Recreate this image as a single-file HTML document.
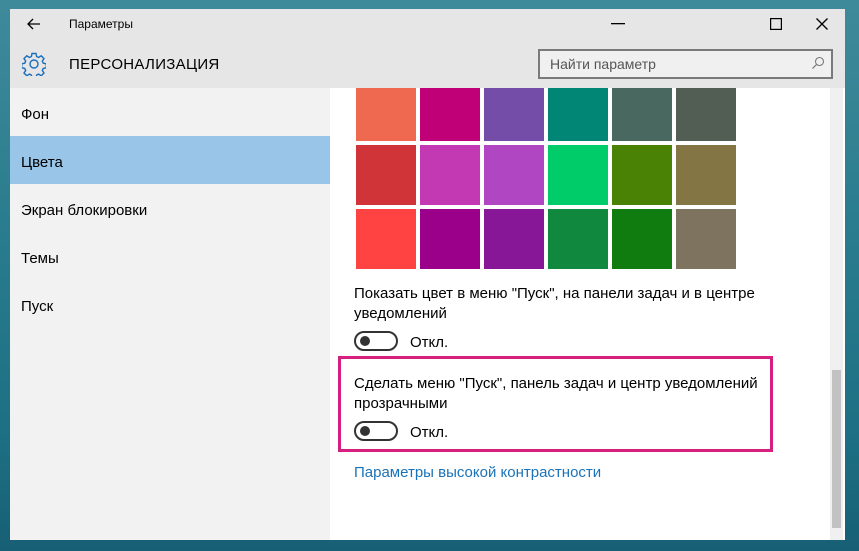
<!DOCTYPE html>
<html><head><meta charset="utf-8"><style>
*{margin:0;padding:0;box-sizing:border-box}
body{width:859px;height:551px;overflow:hidden;position:relative;font-family:"Liberation Sans","DejaVu Sans",sans-serif;
background:linear-gradient(180deg,#3f8a9a 0%,#2a7d8e 40%,#1d6f83 80%,#175f74 100%);}
.win{position:absolute;left:10px;top:9px;width:835px;height:531px;background:#fff;overflow:hidden}
.hdr{position:absolute;left:0;top:0;width:835px;height:79px;background:#e6e6e6}
.side{position:absolute;left:0;top:79px;width:320px;height:452px;background:#f2f2f2}
.t{position:absolute;white-space:nowrap;color:#000}
.item{position:absolute;left:0;width:320px;height:48px;font-size:15px;line-height:48px;padding-left:11px}
.item span{position:relative;top:3px}
.sel{background:#99c5e8}
.sw{position:absolute;width:60px}
.sb{position:absolute;left:820px;top:79px;width:13px;height:452px;background:#f0f0f0}
.thumb{position:absolute;left:822px;top:361px;width:9px;height:158px;background:#c2c2c2}
.tog{position:absolute;width:44px;height:20px;border:2px solid #333;border-radius:10px}
.tog:after{content:"";position:absolute;left:4px;top:3px;width:10px;height:10px;border-radius:50%;background:#333}
.c{font-size:15px;line-height:20px}
</style></head><body>
<div class="win">
<div class="hdr"></div>
<svg style="position:absolute;left:16px;top:7px" width="16" height="16" viewBox="0 0 16 16"><path d="M14 8H2M7 3L2 8l5 5" stroke="#000" stroke-width="1.3" fill="none"/></svg>
<div class="t" style="left:59px;top:8px;font-size:12px">Параметры</div>
<svg style="position:absolute;left:601px;top:14px" width="14" height="2"><rect width="14" height="1.3" fill="#000"/></svg>
<svg style="position:absolute;left:760px;top:9px" width="12" height="12"><rect x="0.6" y="0.6" width="10.8" height="10.8" stroke="#000" stroke-width="1.2" fill="none"/></svg>
<svg style="position:absolute;left:806px;top:9px" width="12" height="12"><path d="M0.5 0.5L11.5 11.5M11.5 0.5L0.5 11.5" stroke="#000" stroke-width="1.3"/></svg>
<svg style="position:absolute;left:12px;top:43px" width="24" height="24" viewBox="0 0 24 24"><path d="M10 1.5h4l.6 3 2 1 2.6-1.7 2.8 2.8-1.7 2.6 1 2 3 .6v4l-3 .6-1 2 1.7 2.6-2.8 2.8-2.6-1.7-2 1-.6 3h-4l-.6-3-2-1-2.6 1.7-2.8-2.8 1.7-2.6-1-2-3-.6v-4l3-.6 1-2-1.7-2.6 2.8-2.8 2.6 1.7 2-1z" fill="none" stroke="#1a6fc0" stroke-width="1.4"/><circle cx="12" cy="12" r="4" fill="none" stroke="#1a6fc0" stroke-width="1.4"/></svg>
<div class="t" style="left:59px;top:47px;font-size:15px;letter-spacing:.3px">ПЕРСОНАЛИЗАЦИЯ</div>
<div style="position:absolute;left:528px;top:40px;width:295px;height:30px;border:2px solid #7a7a7a;background:#f0f0f0"></div>
<div class="t" style="left:540px;top:47px;font-size:14px;color:#555">Найти параметр</div>
<svg style="position:absolute;left:801px;top:47px" width="14" height="14" viewBox="0 0 14 14"><circle cx="8.5" cy="5.5" r="4" fill="none" stroke="#777" stroke-width="1.1"/><path d="M5.5 8.5L1.5 12.5" stroke="#777" stroke-width="1.2"/></svg>
<div class="side">
<div class="item" style="top:0"><span>Фон</span></div>
<div class="item sel" style="top:48px"><span>Цвета</span></div>
<div class="item" style="top:96px"><span>Экран блокировки</span></div>
<div class="item" style="top:144px"><span>Темы</span></div>
<div class="item" style="top:192px"><span>Пуск</span></div>
</div>
<div class="sw" style="left:346px;top:79px;height:53px;background:#ef6950"></div>
<div class="sw" style="left:410px;top:79px;height:53px;background:#bf0077"></div>
<div class="sw" style="left:474px;top:79px;height:53px;background:#744da9"></div>
<div class="sw" style="left:538px;top:79px;height:53px;background:#018574"></div>
<div class="sw" style="left:602px;top:79px;height:53px;background:#486860"></div>
<div class="sw" style="left:666px;top:79px;height:53px;background:#525e54"></div>
<div class="sw" style="left:346px;top:136px;height:60px;background:#d13438"></div>
<div class="sw" style="left:410px;top:136px;height:60px;background:#c239b3"></div>
<div class="sw" style="left:474px;top:136px;height:60px;background:#b146c2"></div>
<div class="sw" style="left:538px;top:136px;height:60px;background:#00cc6a"></div>
<div class="sw" style="left:602px;top:136px;height:60px;background:#498205"></div>
<div class="sw" style="left:666px;top:136px;height:60px;background:#847545"></div>
<div class="sw" style="left:346px;top:200px;height:60px;background:#ff4343"></div>
<div class="sw" style="left:410px;top:200px;height:60px;background:#9a0089"></div>
<div class="sw" style="left:474px;top:200px;height:60px;background:#881798"></div>
<div class="sw" style="left:538px;top:200px;height:60px;background:#10893e"></div>
<div class="sw" style="left:602px;top:200px;height:60px;background:#107c10"></div>
<div class="sw" style="left:666px;top:200px;height:60px;background:#7e735f"></div>
<div class="t c" style="left:344px;top:275px">Показать цвет в меню "Пуск", на панели задач и в центре<br>уведомлений</div>
<div class="tog" style="left:344px;top:322px"></div>
<div class="t c" style="left:400px;top:324px">Откл.</div>
<div style="position:absolute;left:328px;top:347px;width:435px;height:96px;border:3px solid #d61f7f"></div>
<div class="t c" style="left:344px;top:365px">Сделать меню "Пуск", панель задач и центр уведомлений<br>прозрачными</div>
<div class="tog" style="left:344px;top:412px"></div>
<div class="t c" style="left:400px;top:414px">Откл.</div>
<div class="t c" style="left:344px;top:454px;color:#1a73b8">Параметры высокой контрастности</div>
<div class="sb"></div>
<div class="thumb"></div>
</div>
</body></html>
